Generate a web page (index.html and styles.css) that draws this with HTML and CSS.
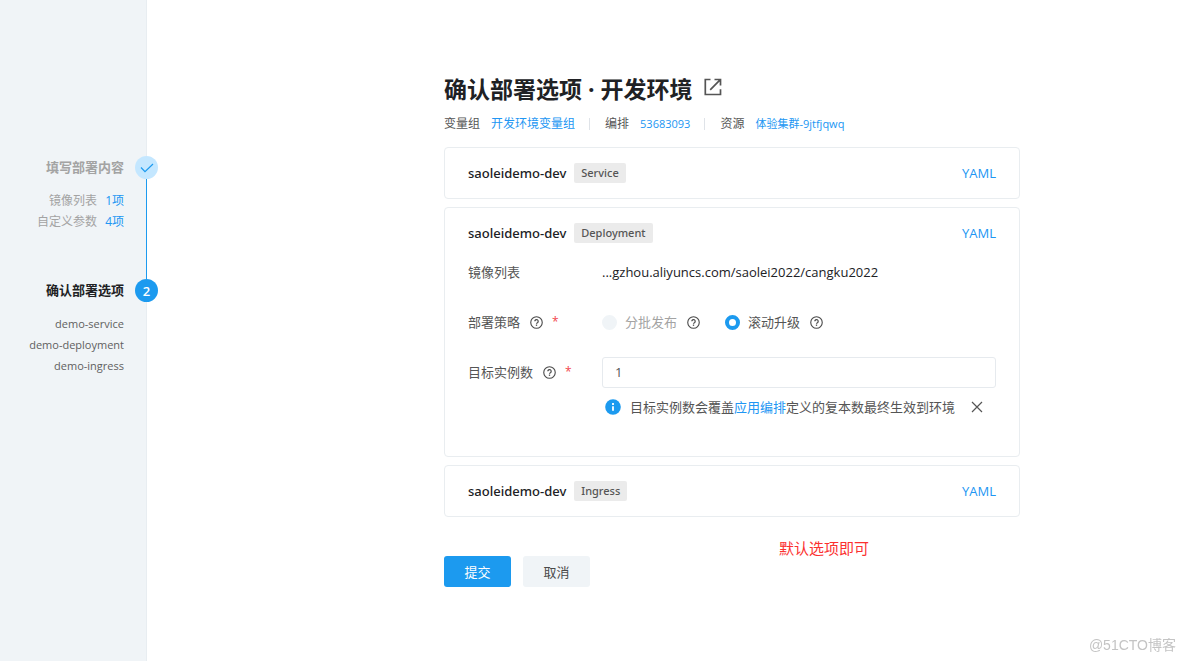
FILE: index.html
```html
<!DOCTYPE html>
<html lang="zh-CN">
<head>
<meta charset="utf-8">
<meta name="viewport" content="width=device-width, initial-scale=1">
<title>确认部署选项 · 开发环境</title>
<link rel="stylesheet" href="styles.css">
</head>
<body>
<svg class="sprite" aria-hidden="true">
  <symbol id="help" viewBox="0 0 14 14">
    <circle cx="7" cy="7" r="6.2" fill="none" stroke="currentColor" stroke-width="1.2"/>
    <path d="M5.2 5.7a1.8 1.8 0 1 1 2.8 1.5c-.7.4-1 .6-1 1.2" fill="none" stroke="currentColor" stroke-width="1.3"/>
    <rect x="6.3" y="9.2" width="1.4" height="1.4" fill="currentColor"/>
  </symbol>
</svg>
<div class="layout">
  <aside class="sidebar">
    <ol class="steps">
      <li class="step step-done">
        <div class="step-text">
          <h2 class="step-title">填写部署内容</h2>
          <ul class="step-items">
            <li>镜像列表<a class="count" href="#">1项</a></li>
            <li>自定义参数<a class="count" href="#">4项</a></li>
          </ul>
        </div>
        <div class="step-track">
          <span class="badge">
            <svg width="14" height="10" viewBox="0 0 14 10" aria-hidden="true"><path d="M1 4.5 5 8.7 13 1" fill="none" stroke="currentColor" stroke-width="1.2"/></svg>
          </span>
          <span class="line"></span>
        </div>
      </li>
      <li class="step step-current">
        <div class="step-text">
          <h2 class="step-title">确认部署选项</h2>
          <ul class="step-items">
            <li>demo-service</li>
            <li>demo-deployment</li>
            <li>demo-ingress</li>
          </ul>
        </div>
        <div class="step-track"><span class="badge">2</span></div>
      </li>
    </ol>
  </aside>
  <main class="main">
    <form class="content">
      <header>
        <h1 class="title">确认部署选项 · 开发环境
          <a class="open" href="#" aria-label="打开"><svg width="18" height="18" viewBox="0 0 18 18" aria-hidden="true"><path d="M6.5 1.5H1.3v15h15.2v-5.3M10.5 1.5h6v6M16.3 1.7 6.2 11.8" fill="none" stroke="currentColor" stroke-width="1.7"/></svg></a>
        </h1>
        <dl class="meta">
          <div class="meta-item"><dt>变量组</dt><dd><a href="#">开发环境变量组</a></dd></div>
          <div class="meta-item"><dt>编排</dt><dd class="ident"><a href="#">53683093</a></dd></div>
          <div class="meta-item"><dt>资源</dt><dd class="ident"><a href="#">体验集群-9jtfjqwq</a></dd></div>
        </dl>
      </header>
      <div class="cards">
        <section class="card">
          <div class="card-head"><h3 class="name">saoleidemo-dev</h3><span class="tag">Service</span><a class="yaml" href="#">YAML</a></div>
        </section>
        <section class="card card-open">
          <div class="card-head"><h3 class="name">saoleidemo-dev</h3><span class="tag">Deployment</span><a class="yaml" href="#">YAML</a></div>
          <div class="row row-image">
            <span class="label">镜像列表</span>
            <span class="image">...gzhou.aliyuncs.com/saolei2022/cangku2022</span>
          </div>
          <div class="row" role="radiogroup" aria-labelledby="strategy">
            <span class="label" id="strategy">部署策略<svg class="help"><use href="#help"/></svg><span class="required">*</span></span>
            <div class="radios">
              <label class="option option-off"><input class="radio" type="radio" name="strategy" disabled>分批发布<svg class="help"><use href="#help"/></svg></label>
              <label class="option"><input class="radio" type="radio" name="strategy" checked>滚动升级<svg class="help"><use href="#help"/></svg></label>
            </div>
          </div>
          <div class="row">
            <label class="label" for="replicas">目标实例数<svg class="help"><use href="#help"/></svg><span class="required">*</span></label>
            <input class="input" id="replicas" type="text" value="1">
          </div>
          <div class="note">
            <svg class="info" width="16" height="16" viewBox="0 0 16 16" aria-hidden="true"><circle cx="8" cy="8" r="7.8" fill="#1c9aef"/><path d="M8 4v2M8 7.2v4.6" stroke="#fff" stroke-width="1.8"/></svg>
            <p class="note-text">目标实例数会覆盖<a href="#">应用编排</a>定义的复本数最终生效到环境</p>
            <button class="close" type="button" aria-label="关闭"><svg width="12" height="12" viewBox="0 0 12 12" aria-hidden="true"><path d="M1 1 11 11M11 1 1 11" fill="none" stroke="currentColor" stroke-width="1.2"/></svg></button>
          </div>
        </section>
        <section class="card">
          <div class="card-head"><h3 class="name">saoleidemo-dev</h3><span class="tag">Ingress</span><a class="yaml" href="#">YAML</a></div>
        </section>
      </div>
      <footer class="actions">
        <button class="btn btn-primary" type="submit">提交</button>
        <button class="btn" type="button">取消</button>
        <p class="remark">默认选项即可</p>
      </footer>
    </form>
  </main>
</div>
<span class="watermark">@51CTO博客</span>
</body>
</html>
```
FILE: styles.css
```css
* { box-sizing: border-box; }
body, h1, h2, h3, p, ul, ol, dl, dd { margin: 0; padding: 0; }
ul, ol { list-style: none; }
body {
  background: #fff;
  color: #555;
  font: 13px/20px "Open Sans", "Noto Sans CJK SC", sans-serif;
}
a { color: #2196f3; text-decoration: none; }
.sprite { position: absolute; width: 0; height: 0; }
.layout { display: flex; min-height: 100vh; }

.sidebar {
  flex: 0 0 147px;
  padding-top: 156px;
  background: #f0f4f7;
  border-right: 1px solid #e8edf1;
}
.steps { margin-right: -12px; }
.step { display: flex; justify-content: flex-end; gap: 11px; }
.step-text { text-align: right; }
.step-done .step-text { padding-bottom: 47px; color: #a3a3a3; }
.step-title { font-size: 13px; line-height: 22px; font-weight: 700; }
.step-current .step-title { color: #202124; }
.step-items { margin-top: 12px; font-size: 12px; line-height: 21px; }
.step-current .step-items { color: #606060; font-size: 11px; }
.count { margin-left: 8px; }
.step-track { display: flex; flex-direction: column; align-items: center; }
.badge {
  display: flex;
  align-items: center;
  justify-content: center;
  width: 23px;
  height: 23px;
  border-radius: 50%;
  background: #1c9aef;
  color: #fff;
  font-weight: 600;
}
.step-done .badge { background: #c4e7ff; color: #1c9aef; }
.line { flex: 1; width: 1px; background: #1c9aef; }

.main {
  flex: 1;
  display: grid;
  grid-template-columns: 297fr minmax(0, 576px) 164fr;
  padding: 72px 0 40px;
}
.content { grid-column: 2; }
.title {
  display: flex;
  align-items: center;
  gap: 11px;
  color: #202124;
  font-size: 23px;
  line-height: 34px;
  font-weight: 700;
}
.open { display: flex; padding-bottom: 4px; color: #555; }
.meta { display: flex; margin-top: 8px; font-size: 12px; }
.meta-item { display: flex; align-items: center; gap: 11px; }
.meta-item + .meta-item::before {
  content: "";
  width: 1px;
  height: 12px;
  margin: 0 4px 0 14px;
  background: #dfe3e8;
}
.ident { font-size: 11px; }

.cards { display: grid; gap: 8px; margin-top: 13px; }
.card { padding: 0 23px; border: 1px solid #e9edf0; border-radius: 4px; }
.card-open { padding-bottom: 39px; }
.card-head { display: flex; align-items: center; height: 50px; }
.name, .tag { font-family: "Noto Sans", "Noto Sans CJK SC", sans-serif; font-weight: 500; }
.name { color: #202124; font-size: 13px; }
.tag {
  margin-left: 8px;
  padding: 0 7px;
  border-radius: 2px;
  background: #ebebeb;
  font-size: 11px;
}
.yaml { margin-left: auto; }
.row {
  display: grid;
  grid-template-columns: 134px minmax(0, 1fr);
  align-items: center;
  min-height: 50px;
}
.row-image { min-height: 28px; margin-bottom: 11px; }
.label, .option { display: flex; align-items: center; }
.image { color: #202124; }
.help { width: 13px; height: 13px; margin-left: 10px; color: #4a4a4a; }
.required { margin-left: 9px; color: #f2484d; font-size: 12px; }
.radios { display: flex; gap: 25px; }
.option-off { color: #a3a3a3; }
.radio {
  appearance: none;
  width: 15px;
  height: 15px;
  margin: 0 8px 0 0;
  border: 4px solid #1c9aef;
  border-radius: 50%;
  background: #fff;
}
.radio:disabled { border-color: #f0f4f7; background: #f0f4f7; }
.input {
  width: 100%;
  height: 31px;
  padding: 0 12px;
  border: 1px solid #e6eaee;
  border-radius: 3px;
  color: #555;
  font: inherit;
}
.note { display: flex; align-items: center; margin-left: 137px; }
.note-text { margin: 0 16px 0 9px; }
.close { display: flex; padding: 0; border: 0; background: none; color: #555; }

.actions { display: flex; align-items: flex-end; gap: 12px; height: 70px; }
.btn {
  width: 67px;
  height: 31px;
  padding: 0;
  border: 0;
  border-radius: 3px;
  background: #f0f4f7;
  color: #4a4a4a;
  font: inherit;
}
.btn-primary { background: #1c9aef; color: #fff; }
.remark {
  align-self: flex-start;
  margin: 21px 151px 0 auto;
  color: #fb3030;
  font-size: 15px;
}
.watermark {
  position: fixed;
  right: 8px;
  bottom: 6px;
  color: #c4c4c4;
  font: 14px/20px "Liberation Sans", "Noto Sans CJK SC", sans-serif;
}
```
